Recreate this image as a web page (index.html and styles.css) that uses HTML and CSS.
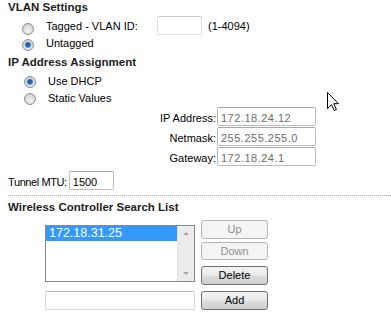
FILE: index.html
```html
<!DOCTYPE html>
<html>
<head>
<meta charset="utf-8">
<link rel="stylesheet" href="styles.css">
</head>
<body>
<div class="page">
  <h2 class="hd hd-vlan">VLAN Settings</h2>
  <div class="opt opt-tagged">
    <input type="radio" class="radio" name="vlan">
    <label class="lbl lbl-tagged">Tagged - VLAN ID:</label>
    <input class="field field-vlan" disabled>
    <span class="lbl hint">(1-4094)</span>
  </div>
  <div class="opt opt-untagged">
    <input type="radio" class="radio" name="vlan" checked>
    <label class="lbl">Untagged</label>
  </div>

  <h2 class="hd hd-ip">IP Address Assignment</h2>
  <div class="opt opt-dhcp">
    <input type="radio" class="radio radio-ip" name="ip" checked>
    <label class="lbl">Use DHCP</label>
  </div>
  <div class="opt opt-static">
    <input type="radio" class="radio radio-ip" name="ip">
    <label class="lbl">Static Values</label>
  </div>

  <div class="ipgrid">
    <label class="iplbl">IP Address:</label>
    <input class="field field-ip" value="172.18.24.12" disabled>
    <label class="iplbl">Netmask:</label>
    <input class="field field-ip" value="255.255.255.0" disabled>
    <label class="iplbl">Gateway:</label>
    <input class="field field-ip" value="172.18.24.1" disabled>
  </div>

  <div class="mtu">
    <label class="lbl lbl-mtu">Tunnel MTU:</label>
    <input class="field field-mtu" value="1500">
  </div>

  <div class="sep"></div>

  <h2 class="hd hd-wlc">Wireless Controller Search List</h2>
  <div class="list-row">
    <div class="listbox">
      <div class="items">
        <div class="item selected">172.18.31.25</div>
      </div>
      <div class="scroll">
        <span class="arr arr-up"></span>
        <span class="arr arr-down"></span>
      </div>
    </div>
    <div class="btns">
      <button class="btn btn-up" disabled>Up</button>
      <button class="btn btn-down" disabled>Down</button>
      <button class="btn btn-del">Delete</button>
    </div>
  </div>
  <div class="add-row">
    <input class="field field-add">
    <button class="btn btn-add">Add</button>
  </div>

  <svg class="cursor" width="12" height="19" viewBox="0 0 12 19">
    <path d="M0.5 0.5 L0.5 16.5 L4.5 12.7 L7.2 18.5 L9.4 17.5 L6.8 11.7 L11.5 11.7 Z" fill="#fff" stroke="#000" stroke-width="1" stroke-linejoin="miter"/>
  </svg>
</div>
</body>
</html>
```

FILE: styles.css
```css
html, body {
  margin: 0;
  padding: 0;
  background: #ffffff;
}

.page {
  position: relative;
  width: 391px;
  height: 322px;
  padding-left: 8px;
  box-sizing: border-box;
  font-family: "Liberation Sans", Arial, sans-serif;
  font-size: 11px;
  color: #000;
  overflow: hidden;
}

.hd {
  margin: 0;
  font-size: 11.5px;
  font-weight: bold;
  color: #1e1e1e;
  height: 14px;
  line-height: 14px;
}

.hd-ip {
  margin-top: 1px;
}

.hd-wlc {
  margin-top: 4px;
}

.opt {
  display: flex;
  align-items: flex-start;
  height: 18px;
}

.opt-tagged {
  height: 22px;
}

.lbl {
  line-height: 13px;
  white-space: nowrap;
}

/* radios */
.radio {
  -webkit-appearance: none;
  appearance: none;
  margin: 0;
  width: 12px;
  height: 12px;
  border-radius: 50%;
  border: 1px solid #8f8f8f;
  background: radial-gradient(circle at 50% 65%, #f4f4f4 0%, #dedede 50%, #c2c2c2 100%);
  box-sizing: border-box;
  position: relative;
  margin-left: 14px;
  flex: none;
}

.radio:checked::after {
  content: "";
  position: absolute;
  left: 2px;
  top: 2px;
  width: 6px;
  height: 6px;
  border-radius: 50%;
  background: radial-gradient(circle at 45% 40%, #1c4f8e 0%, #2c78c8 50%, #8cc8f0 100%);
}

.radio-ip {
  margin-left: 16px;
}

.opt .lbl {
  margin-left: 12px;
}

.opt-tagged .radio { margin-top: 9px; }
.opt-tagged .lbl { margin-top: 6px; }
.lbl-tagged { width: 111px; }
.opt-tagged .hint { margin-left: 6px; width: auto; }

.opt-untagged .radio { margin-top: 3px; }
.opt-untagged .lbl { margin-top: 1px; }

.opt-dhcp .radio { margin-top: 7px; }
.opt-dhcp .lbl { margin-top: 6px; }

.opt-static .radio { margin-top: 6px; }
.opt-static .lbl { margin-top: 5px; }

/* text fields */
.field {
  box-sizing: border-box;
  height: 19px;
  margin: 0;
  padding: 3px 3px 0 3px;
  line-height: 14px;
  font-family: "Liberation Sans", Arial, sans-serif;
  font-size: 11px;
  color: #000;
  background: #fff;
  border: 1px solid #b9bcc1;
  border-top-color: #a4a7ab;
  border-radius: 2px;
  outline: none;
}

.field:disabled {
  color: #6d6d6d;
  background: #fff;
}

.field-vlan {
  width: 45px;
  margin-top: 2px;
  border-color: #dadde2;
  border-top-color: #c8cbcf;
}

.ipgrid {
  display: grid;
  grid-template-columns: 70px 99px;
  column-gap: 1px;
  row-gap: 1px;
  align-items: baseline;
  margin-left: 138px;
  margin-top: 2px;
}

.iplbl {
  text-align: right;
  white-space: nowrap;
}

.field-ip {
  width: 99px;
  letter-spacing: 0.5px;
}

.mtu {
  display: flex;
  align-items: baseline;
  gap: 2px;
  margin-top: 5px;
}

.lbl-mtu {
  letter-spacing: -0.4px;
}

.field-mtu {
  width: 45px;
}

.sep {
  margin-top: 5px;
  border-top: 1px dotted #a6a6a6;
}

/* search list */
.list-row {
  display: flex;
  align-items: flex-start;
  margin-top: 6px;
  margin-left: 37px;
  height: 65px;
}

.listbox {
  margin-top: 5px;
  width: 150px;
  height: 57px;
  box-sizing: border-box;
  border: 1px solid #848890;
  display: flex;
  background: #fff;
}

.items {
  flex: 1;
}

.item {
  height: 15px;
  line-height: 15px;
  padding-left: 3px;
  font-size: 12.5px;
}

.item.selected {
  background: #3399ff;
  color: #fff;
}

.scroll {
  width: 17px;
  background: #ececec;
  border-left: 1px solid #e2e2e2;
  display: flex;
  flex-direction: column;
  justify-content: space-between;
  align-items: center;
  padding: 6px 0 6px;
  box-sizing: border-box;
}

.arr {
  width: 0;
  height: 0;
  border-left: 3px solid transparent;
  border-right: 3px solid transparent;
}

.arr-up {
  border-bottom: 3px solid #a3a3a3;
}

.arr-down {
  border-top: 3px solid #a3a3a3;
}

.btns {
  display: flex;
  flex-direction: column;
  margin-left: 6px;
  width: 67px;
}

.btn {
  box-sizing: border-box;
  width: 67px;
  height: 19px;
  margin: 0;
  padding: 0;
  font-family: "Liberation Sans", Arial, sans-serif;
  font-size: 11px;
  line-height: 17px;
  color: #000;
  border: 1px solid #707070;
  border-radius: 3px;
  background: linear-gradient(#f2f2f2 0%, #ebebeb 48%, #dddddd 52%, #cfcfcf 100%);
}

.btn:disabled {
  color: #8f8f8f;
  border-color: #b5b5b5;
  background: #f4f4f4;
}

.btn-down {
  margin-top: 3px;
  height: 18px;
  line-height: 16px;
}

.btn-del {
  margin-top: 6px;
}

.add-row {
  display: flex;
  margin-top: 6px;
  margin-left: 37px;
}

.field-add {
  width: 150px;
  border-color: #d3d6db;
  border-top-color: #b3b6ba;
}

.btn-add {
  margin-left: 6px;
}

.cursor {
  position: absolute;
  left: 327px;
  top: 92px;
}
```
